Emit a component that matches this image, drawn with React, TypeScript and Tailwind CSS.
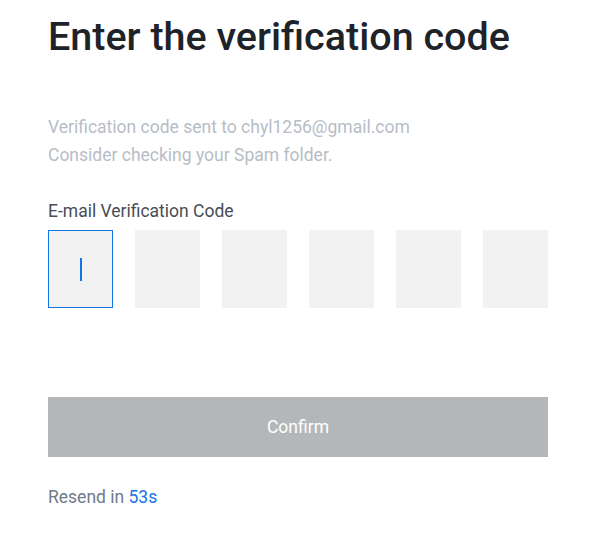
export default function App() {
  return (
    <div className="w-[592px] h-[548px] bg-white pl-12 pr-[44px] pt-[13px]" style={{ fontFamily: "Roboto, 'Liberation Sans', sans-serif" }}>
      <h1 className="text-[39.5px] leading-[48px] font-medium text-[#1e2329]">Enter the verification code</h1>
      <div className="mt-[52px] text-[17.5px] leading-[28px] text-[#b7bdc6]">
        <p>Verification code sent to chyl1256@gmail.com</p>
        <p>Consider checking your Spam folder.</p>
      </div>
      <p className="mt-[31px] text-[17.5px] leading-[22px] text-[#474d57]">E-mail Verification Code</p>
      <div className="mt-[8px] flex justify-between">
        <div className="w-[65px] h-[78px] bg-[#f2f2f2] border border-[#1774e8] flex items-center justify-center">
          <div className="w-[2px] h-[23px] bg-[#1774e8]" />
        </div>
        <div className="w-[65px] h-[78px] bg-[#f2f2f2]" />
        <div className="w-[65px] h-[78px] bg-[#f2f2f2]" />
        <div className="w-[65px] h-[78px] bg-[#f2f2f2]" />
        <div className="w-[65px] h-[78px] bg-[#f2f2f2]" />
        <div className="w-[65px] h-[78px] bg-[#f2f2f2]" />
      </div>
      <button className="mt-[89px] w-full h-[60px] bg-[#b4b7ba] text-white text-[17.5px]">Confirm</button>
      <p className="mt-[29px] text-[17.5px] leading-[22px] text-[#707a8a]">
        Resend in <span className="text-[#1a73e8]">53s</span>
      </p>
    </div>
  );
}
